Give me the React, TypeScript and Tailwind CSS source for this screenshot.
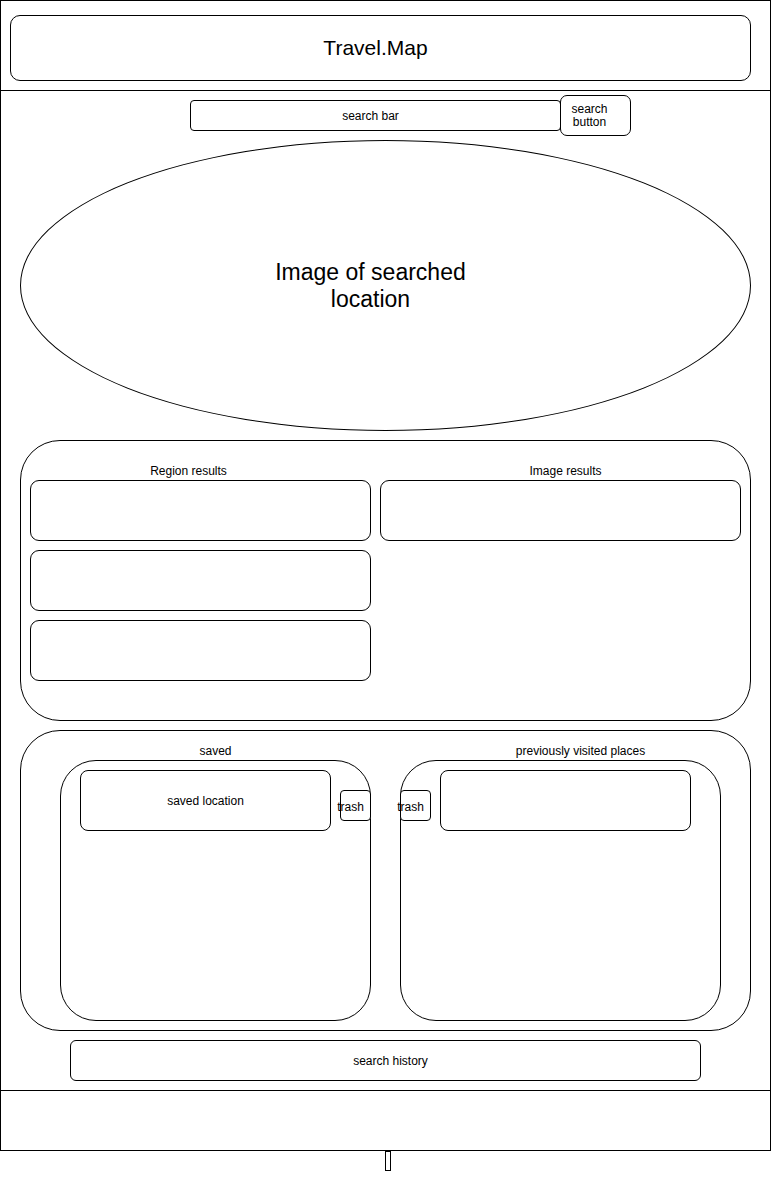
import React from "react";

export default function App() {
  return (
    <div className="font-['Liberation_Sans',Arial,sans-serif] text-black bg-white">
      <div className="w-[771px] h-[1151px] border border-black flex flex-col">
        {/* Header */}
        <div className="h-[90px] shrink-0 border-b border-black pt-[14px] pl-[9px]">
          <div className="w-[741px] h-[66px] border border-black rounded-[10px] flex items-center justify-center">
            <span className="text-[21px] leading-[26px] mr-[10px]">Travel.Map</span>
          </div>
        </div>

        {/* Main */}
        <div className="h-[1000px] shrink-0 border-b border-black flex flex-col">
          {/* Search row */}
          <div className="mt-[4px] ml-[189px] flex items-center">
            <div className="w-[371px] h-[31px] border border-black rounded-[4px] flex items-center justify-center">
              <span className="text-[12px] leading-[14px] mr-[10px]">search bar</span>
            </div>
            <div className="relative z-10 -ml-[1px] w-[71px] h-[41px] border border-black rounded-[7px] bg-white flex items-center justify-center">
              <span className="text-[12px] leading-[13px] text-center mr-[12px]">
                search
                <br />
                button
              </span>
            </div>
          </div>

          {/* Image ellipse */}
          <div className="mt-[4px] ml-[19px] w-[731px] h-[291px] rounded-[50%] border border-black flex items-center justify-center">
            <div className="text-[23px] leading-[27px] text-center mr-[30px]">
              Image of searched
              <br />
              location
            </div>
          </div>

          {/* Results */}
          <div className="mt-[9px] ml-[19px] w-[731px] h-[281px] rounded-[40px] border border-black flex pt-[22px] pl-[9px] gap-[9px]">
            <div className="w-[341px] flex flex-col">
              <div className="h-[16px] text-[12px] leading-[16px] text-center mr-[24px]">Region results</div>
              <div className="mt-[1px] flex flex-col gap-[9px]">
                <div className="h-[61px] border border-black rounded-[9px]" />
                <div className="h-[61px] border border-black rounded-[9px]" />
                <div className="h-[61px] border border-black rounded-[9px]" />
              </div>
            </div>
            <div className="w-[361px] flex flex-col">
              <div className="h-[16px] text-[12px] leading-[16px] text-center ml-[10px]">Image results</div>
              <div className="mt-[1px] h-[61px] border border-black rounded-[9px]" />
            </div>
          </div>

          {/* Saved / previously visited */}
          <div className="mt-[9px] ml-[19px] w-[731px] h-[301px] rounded-[40px] border border-black flex pt-[12px] pl-[39px] gap-[29px]">
            <div className="w-[311px] flex flex-col">
              <div className="h-[16px] text-[12px] leading-[16px] text-center">saved</div>
              <div className="mt-[1px] h-[261px] border border-black rounded-[36px] flex items-start pt-[9px] pl-[19px]">
                <div className="w-[251px] h-[61px] border border-black rounded-[8px] flex items-center justify-center">
                  <span className="text-[12px] leading-[14px]">saved location</span>
                </div>
                <div className="mt-[20px] ml-[9px] -mr-[1px] w-[31px] h-[31px] border border-black rounded-[4px] bg-white flex items-center justify-center">
                  <span className="text-[12px] leading-[14px] whitespace-nowrap mr-[10px] pt-[2px]">trash</span>
                </div>
              </div>
            </div>
            <div className="w-[321px] flex flex-col">
              <div className="h-[16px] text-[12px] leading-[16px] text-center pl-[40px] whitespace-nowrap">previously visited places</div>
              <div className="mt-[1px] h-[261px] border border-black rounded-[36px] flex items-start pt-[9px]">
                <div className="mt-[20px] -ml-[1px] w-[31px] h-[31px] border border-black rounded-[4px] bg-white flex items-center justify-center">
                  <span className="text-[12px] leading-[14px] whitespace-nowrap mr-[10px] pt-[2px]">trash</span>
                </div>
                <div className="ml-[9px] w-[251px] h-[61px] border border-black rounded-[8px]" />
              </div>
            </div>
          </div>

          {/* Search history */}
          <div className="mt-[9px] ml-[69px] w-[631px] h-[41px] border border-black rounded-[6px] flex items-center justify-center">
            <span className="text-[12px] leading-[14px] ml-[10px]">search history</span>
          </div>
        </div>

        {/* Footer */}
        <div className="flex-1" />
      </div>
      <div className="ml-[385px] w-[6px] h-[20px] border border-black" />
    </div>
  );
}
